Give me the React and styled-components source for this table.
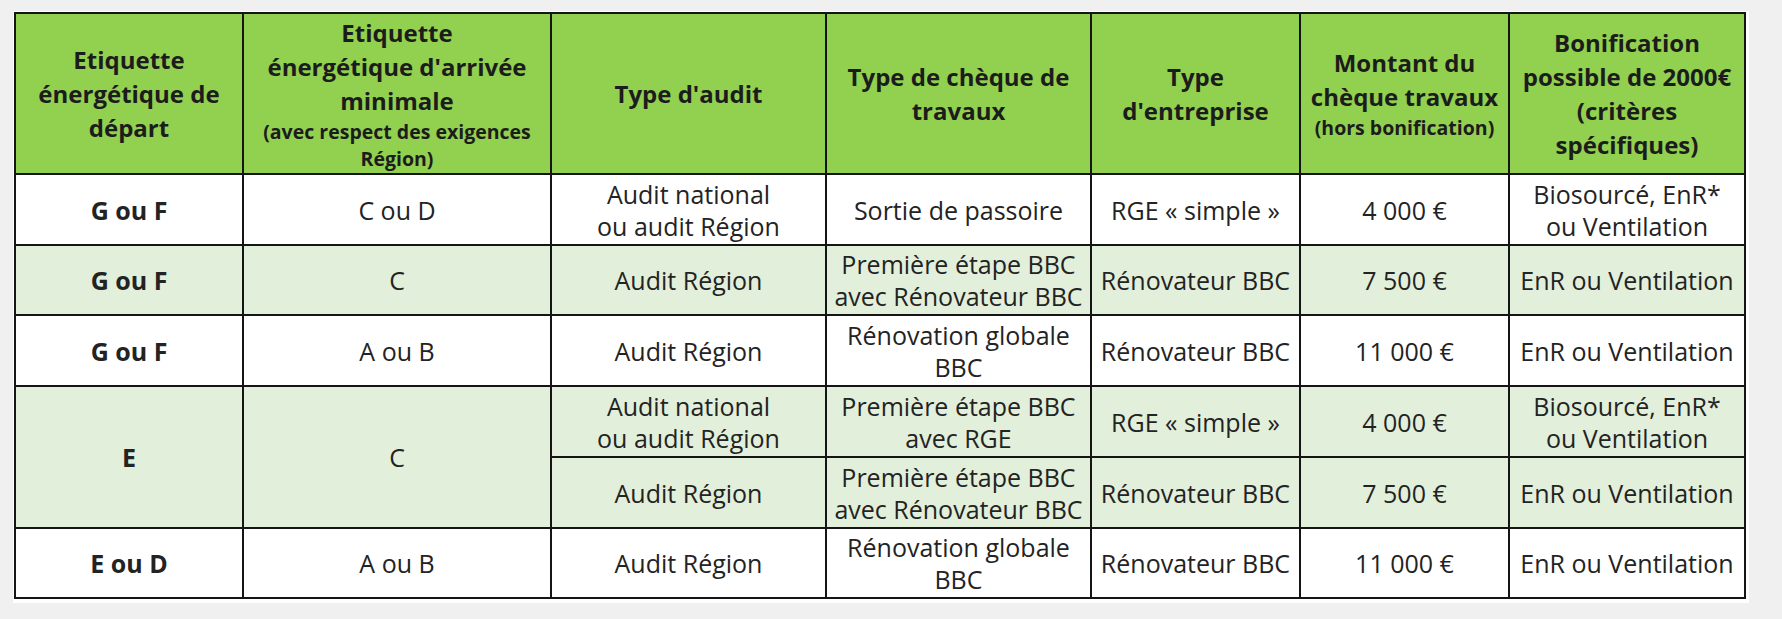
import styled, { createGlobalStyle } from 'styled-components'

const GlobalStyle = createGlobalStyle`
    body {
        margin: 0;
        background: #f0f0f0;
        font-family: "Open Sans", "Liberation Sans", sans-serif;
    }
`

const Page = styled.div`
    padding: 11px 0 0 13px;
`

const Sheet = styled.div`
    background: #ffffff;
    display: inline-block;
    padding: 1px 3px 4px 1px;
`

const Table = styled.table`
    border-collapse: collapse;
    color: #1c1c1c;
    table-layout: fixed;
    width: 1732px;
`

const Row = styled.tr`
    height: ${(p) => p.$h}px;
`

const HeadCell = styled.th`
    background: #92d050;
    border: 2px solid #151515;
    font-size: 24px;
    font-weight: 700;
    line-height: 34px;
    padding: 0;
    text-align: center;
    vertical-align: middle;
    white-space: nowrap;
`

const Note = styled.span`
    display: block;
    font-size: 19.5px;
    line-height: 27px;
`

const Cell = styled.td`
    background: ${(p) => (p.$tint ? '#e2efda' : '#ffffff')};
    border: 2px solid #151515;
    color: #232323;
    font-size: 25px;
    font-weight: ${(p) => (p.$bold ? 700 : 400)};
    line-height: 32px;
    padding: 0;
    text-align: center;
    vertical-align: middle;
    white-space: nowrap;
`

const widths = [228, 308, 275, 265, 209, 209, 236]

const lines = (text) =>
    text.split('\n').map((l, i) => (
        <span key={i}>
            {i > 0 && <br />}
            {l}
        </span>
    ))

const rows = [
    {
        tint: false,
        h: 71,
        cells: [
            ['G ou F', true],
            ['C ou D'],
            ['Audit national\nou audit Région'],
            ['Sortie de passoire'],
            ['RGE « simple »'],
            ['4\u00a0000\u00a0€'],
            ['Biosourcé, EnR*\nou Ventilation'],
        ],
    },
    {
        tint: true,
        h: 70,
        cells: [
            ['G ou F', true],
            ['C'],
            ['Audit Région'],
            ['Première étape BBC\navec Rénovateur BBC'],
            ['Rénovateur BBC'],
            ['7\u00a0500\u00a0€'],
            ['EnR ou Ventilation'],
        ],
    },
    {
        tint: false,
        h: 71,
        cells: [
            ['G ou F', true],
            ['A ou B'],
            ['Audit Région'],
            ['Rénovation globale\nBBC'],
            ['Rénovateur BBC'],
            ['11\u00a0000\u00a0€'],
            ['EnR ou Ventilation'],
        ],
    },
    {
        tint: true,
        h: 71,
        cells: [
            ['E', true, 2],
            ['C', false, 2],
            ['Audit national\nou audit Région'],
            ['Première étape BBC\navec RGE'],
            ['RGE « simple »'],
            ['4\u00a0000\u00a0€'],
            ['Biosourcé, EnR*\nou Ventilation'],
        ],
    },
    {
        tint: true,
        h: 71,
        cells: [
            ['Audit Région'],
            ['Première étape BBC\navec Rénovateur BBC'],
            ['Rénovateur BBC'],
            ['7\u00a0500\u00a0€'],
            ['EnR ou Ventilation'],
        ],
    },
    {
        tint: false,
        h: 70,
        cells: [
            ['E ou D', true],
            ['A ou B'],
            ['Audit Région'],
            ['Rénovation globale\nBBC'],
            ['Rénovateur BBC'],
            ['11\u00a0000\u00a0€'],
            ['EnR ou Ventilation'],
        ],
    },
]

export default function App() {
    return (
        <>
            <GlobalStyle />
            <Page>
                <Sheet>
                    <Table>
                        <colgroup>
                            {widths.map((w, i) => (
                                <col key={i} style={{ width: w }} />
                            ))}
                        </colgroup>
                        <thead>
                            <Row $h={161}>
                                <HeadCell>
                                    Etiquette
                                    <br />
                                    énergétique de
                                    <br />
                                    départ
                                </HeadCell>
                                <HeadCell>
                                    Etiquette
                                    <br />
                                    énergétique d'arrivée
                                    <br />
                                    minimale
                                    <Note>
                                        (avec respect des exigences
                                        <br />
                                        Région)
                                    </Note>
                                </HeadCell>
                                <HeadCell>Type d'audit</HeadCell>
                                <HeadCell>
                                    Type de chèque de
                                    <br />
                                    travaux
                                </HeadCell>
                                <HeadCell>
                                    Type
                                    <br />
                                    d'entreprise
                                </HeadCell>
                                <HeadCell>
                                    Montant du
                                    <br />
                                    chèque travaux
                                    <Note>(hors bonification)</Note>
                                </HeadCell>
                                <HeadCell>
                                    Bonification
                                    <br />
                                    possible de 2000€
                                    <br />
                                    (critères
                                    <br />
                                    spécifiques)
                                </HeadCell>
                            </Row>
                        </thead>
                        <tbody>
                            {rows.map((row, r) => (
                                <Row key={r} $h={row.h}>
                                    {row.cells.map(([text, bold, span], c) => (
                                        <Cell
                                            key={c}
                                            $tint={row.tint}
                                            $bold={bold}
                                            rowSpan={span}>
                                            {lines(text)}
                                        </Cell>
                                    ))}
                                </Row>
                            ))}
                        </tbody>
                    </Table>
                </Sheet>
            </Page>
        </>
    )
}
